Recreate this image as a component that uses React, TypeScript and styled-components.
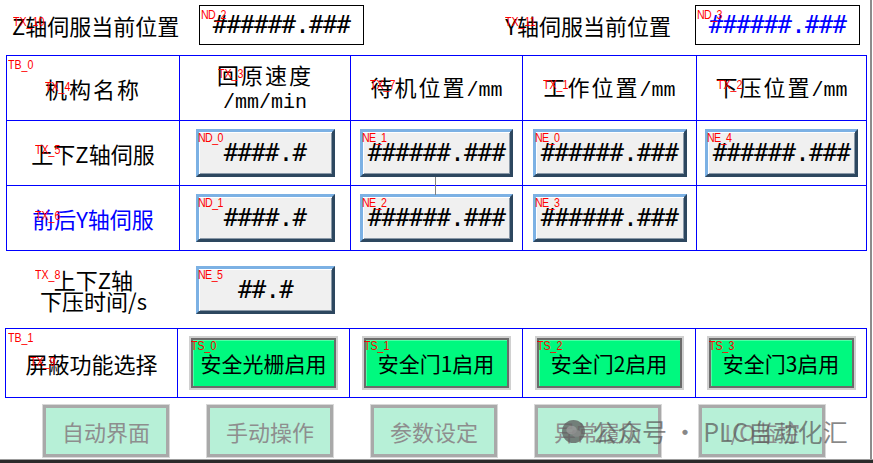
import React from "react";
import styled, { createGlobalStyle } from "styled-components";

const CJK = `"Noto Sans CJK SC", "Noto Sans", sans-serif`;
const MONO = `"DejaVu Sans Mono", "Liberation Mono", monospace`;
const UNIT = `"Liberation Mono", "DejaVu Sans Mono", monospace`;
const TAG = `"Liberation Sans", Arial, sans-serif`;

const GlobalStyle = createGlobalStyle`
  html, body {
    margin: 0;
    padding: 0;
    background: #ffffff;
  }
  body {
    font-family: ${CJK};
    color: #000;
  }
`;

const Page = styled.div`
  position: relative;
  width: 873px;
  height: 463px;
  display: flex;
  flex-direction: column;
  background: #ffffff;
  overflow: hidden;
`;

const Screen = styled.div`
  height: 459px;
  width: 870px;
  border-right: 2px solid #8c8c8c;
  display: flex;
  flex-direction: column;
`;

const BottomBar = styled.div`
  height: 4px;
  background: linear-gradient(#9c9c9c 0 1px, #2b2b2b 1px);
`;

/* object-name tags of the HMI editor, drawn over each part */
const Tag = styled.span<{ $x: number; $y: number }>`
  position: absolute;
  left: ${(p) => p.$x}px;
  top: ${(p) => p.$y}px;
  z-index: 2;
  font-family: ${TAG};
  font-size: 13px;
  line-height: 1;
  color: #ff0000;
  white-space: nowrap;
  transform: scaleX(0.82);
  transform-origin: left top;
  pointer-events: none;
`;

/* ---------- current position readouts ---------- */

const TopRow = styled.div`
  height: 55px;
  box-sizing: border-box;
  padding: 5px 10px 0 12px;
  display: grid;
  grid-template-columns: 187px 165px 1fr 165px;
  align-items: start;
`;

const RightSlot = styled.div`
  display: flex;
  justify-content: flex-end;
  padding-right: 24px;
`;

const AxisLabel = styled.div`
  position: relative;
  height: 40px;
  display: flex;
  align-items: center;
  font-size: 22px;
  white-space: nowrap;
`;

const Readout = styled.div<{ $color: string }>`
  position: relative;
  height: 40px;
  box-sizing: border-box;
  border: 1px solid #000;
  display: flex;
  align-items: center;
  justify-content: center;
  font-family: ${MONO};
  font-size: 24px;
  letter-spacing: -0.7px;
  color: ${(p) => p.$color};
`;

/* ---------- blue grid tables ---------- */

const Table = styled.div<{ $cols: string; $left: number }>`
  display: grid;
  grid-template-columns: ${(p) => p.$cols};
  width: max-content;
  margin-left: ${(p) => p.$left}px;
  border-top: 1px solid #0000ff;
  border-left: 1px solid #0000ff;
`;

const Cell = styled.div<{ $h: number }>`
  position: relative;
  height: ${(p) => p.$h}px;
  box-sizing: border-box;
  border-right: 1px solid #0000ff;
  border-bottom: 1px solid #0000ff;
  display: flex;
  align-items: center;
  justify-content: center;
`;

const HeaderText = styled.div`
  font-size: 22px;
  letter-spacing: 2px;
  white-space: nowrap;
  text-align: center;
  line-height: 24px;
`;

const Unit = styled.span`
  font-family: ${UNIT};
  font-size: 20px;
  letter-spacing: 0;
`;

const RowLabel = styled.div<{ $color?: string }>`
  font-size: 22px;
  line-height: 21px;
  text-align: center;
  white-space: nowrap;
  color: ${(p) => p.$color ?? "#000"};
`;

const ValueButton = styled.div<{ $w: number }>`
  position: relative;
  width: ${(p) => p.$w}px;
  height: 48px;
  box-sizing: border-box;
  border: 3px solid;
  border-color: #7cb1e4 #2d475f #2d475f #7cb1e4;
  background: #f0f0f0;
  box-shadow: inset 1px 1px 0 #ffffff, inset -1px -1px 0 #8a99a8;
  display: flex;
  align-items: center;
  justify-content: center;
  font-family: ${MONO};
  font-size: 24px;
  letter-spacing: -0.7px;
  color: #000;
`;

const PressRow = styled.div`
  display: grid;
  grid-template-columns: 173px 171px;
  height: 77px;
  margin-left: 7px;
`;

const PressCell = styled.div`
  position: relative;
  display: flex;
  align-items: center;
  justify-content: center;
`;

const ToggleButton = styled.div`
  position: relative;
  width: 145px;
  height: 50px;
  box-sizing: border-box;
  border: 2px solid #6b6b6b;
  box-shadow: 0 0 0 2px #d0d0d0, inset 1px 1px 0 #4dffa6;
  background: #00f97f;
  display: flex;
  align-items: center;
  justify-content: center;
  font-size: 21px;
  white-space: nowrap;
  color: #000;
`;

/* ---------- screen navigation ---------- */

const NavRow = styled.div`
  display: flex;
  gap: 38px;
  padding: 7px 0 0 43px;
`;

const NavButton = styled.div`
  width: 126px;
  height: 52px;
  box-sizing: border-box;
  border: 3px solid #a9a9a9;
  box-shadow: 0 0 0 1px #d8d8d8;
  background: #b7f0d7;
  display: flex;
  align-items: center;
  justify-content: center;
  font-size: 22px;
  color: #8e8e8e;
  white-space: nowrap;
`;

const Connector = styled.div`
  position: absolute;
  left: 435px;
  top: 177px;
  width: 1px;
  height: 18px;
  background: #808080;
`;

const Watermark = styled.div`
  position: absolute;
  left: 562px;
  top: 413px;
  display: flex;
  align-items: center;
  gap: 7px;
  font-size: 25px;
  color: rgba(90, 90, 90, 0.72);
  white-space: nowrap;
  pointer-events: none;
`;

const ChatIcon = () => (
  <svg width="23" height="23" viewBox="0 0 24 24">
    <circle cx="12" cy="12" r="12" fill="rgba(95,95,95,0.78)" />
    <ellipse cx="10" cy="10.5" rx="5.5" ry="4.5" fill="rgba(160,160,160,0.7)" />
    <ellipse cx="15" cy="14" rx="4.5" ry="3.6" fill="rgba(140,140,140,0.7)" />
  </svg>
);

type ValueSpec = { tag: string; text: string; w: number };

const row1: ValueSpec[] = [
  { tag: "ND_0", text: "####.#", w: 139 },
  { tag: "NE_1", text: "######.###", w: 153 },
  { tag: "NE_0", text: "######.###", w: 154 },
  { tag: "NE_4", text: "######.###", w: 153 },
];

const row2: ValueSpec[] = [
  { tag: "ND_1", text: "####.#", w: 139 },
  { tag: "NE_2", text: "######.###", w: 153 },
  { tag: "NE_3", text: "######.###", w: 154 },
];

const toggles = [
  { tag: "TS_0", text: "安全光栅启用" },
  { tag: "TS_1", text: "安全门1启用" },
  { tag: "TS_2", text: "安全门2启用" },
  { tag: "TS_3", text: "安全门3启用" },
];

const screens = ["自动界面", "手动操作", "参数设定", "异常履历", "I/O监控"];

const ValueField = ({ spec }: { spec: ValueSpec }) => (
  <ValueButton $w={spec.w}>
    <Tag $x={-1} $y={-1}>
      {spec.tag}
    </Tag>
    {spec.text}
  </ValueButton>
);

export default function App() {
  return (
    <>
      <GlobalStyle />
      <Page>
        <Screen>
          <TopRow>
            <AxisLabel>
              <Tag $x={1} $y={10}>TX_10</Tag>
              Z轴伺服当前位置
            </AxisLabel>
            <Readout $color="#000">
              <Tag $x={1} $y={2}>ND_2</Tag>
              ######.###
            </Readout>
            <RightSlot>
              <AxisLabel>
                <Tag $x={0} $y={10}>TX_11</Tag>
                Y轴伺服当前位置
              </AxisLabel>
            </RightSlot>
            <Readout $color="#0000ff">
              <Tag $x={1} $y={2}>ND_3</Tag>
              ######.###
            </Readout>
          </TopRow>

          <Table $cols="173px 171px 172px 174px 170px" $left={6}>
            <Cell $h={65}>
              <Tag $x={1} $y={2}>TB_0</Tag>
              <Tag $x={38} $y={24}>TX_4</Tag>
              <HeaderText>机构名称</HeaderText>
            </Cell>
            <Cell $h={65}>
              <Tag $x={38} $y={11}>TX_3</Tag>
              <HeaderText>
                回原速度
                <br />
                <Unit>/mm/min</Unit>
              </HeaderText>
            </Cell>
            <Cell $h={65}>
              <Tag $x={19} $y={22}>TX_7</Tag>
              <HeaderText>
                待机位置<Unit>/mm</Unit>
              </HeaderText>
            </Cell>
            <Cell $h={65}>
              <Tag $x={20} $y={22}>TX_1</Tag>
              <HeaderText>
                工作位置<Unit>/mm</Unit>
              </HeaderText>
            </Cell>
            <Cell $h={65}>
              <Tag $x={20} $y={22}>TX_2</Tag>
              <HeaderText>
                下压位置<Unit>/mm</Unit>
              </HeaderText>
            </Cell>

            <Cell $h={65}>
              <Tag $x={28} $y={22}>TX_5</Tag>
              <RowLabel>上下Z轴伺服</RowLabel>
            </Cell>
            {row1.map((spec) => (
              <Cell $h={65} key={spec.tag}>
                <ValueField spec={spec} />
              </Cell>
            ))}

            <Cell $h={65}>
              <Tag $x={28} $y={23}>TX_6</Tag>
              <RowLabel $color="#0000ff">前后Y轴伺服</RowLabel>
            </Cell>
            {row2.map((spec) => (
              <Cell $h={65} key={spec.tag}>
                <ValueField spec={spec} />
              </Cell>
            ))}
            <Cell $h={65} />
          </Table>

          <PressRow>
            <PressCell>
              <Tag $x={28} $y={17}>TX_8</Tag>
              <RowLabel>
                上下Z轴
                <br />
                下压时间/s
              </RowLabel>
            </PressCell>
            <PressCell>
              <ValueField spec={{ tag: "NE_5", text: "##.#", w: 139 }} />
            </PressCell>
          </PressRow>

          <Table $cols="172px 172px 173px 173px 171px" $left={5}>
            <Cell $h={69}>
              <Tag $x={2} $y={2}>TB_1</Tag>
              <Tag $x={24} $y={26}>TX_9</Tag>
              <RowLabel>屏蔽功能选择</RowLabel>
            </Cell>
            {toggles.map((t) => (
              <Cell $h={69} key={t.tag}>
                <ToggleButton>
                  <Tag $x={-2} $y={-1}>{t.tag}</Tag>
                  {t.text}
                </ToggleButton>
              </Cell>
            ))}
          </Table>

          <NavRow>
            {screens.map((s) => (
              <NavButton key={s}>{s}</NavButton>
            ))}
          </NavRow>
        </Screen>
        <BottomBar />

        <Connector />
        <Watermark>
          <ChatIcon />
          公众号 · PLC自动化汇
        </Watermark>
      </Page>
    </>
  );
}
